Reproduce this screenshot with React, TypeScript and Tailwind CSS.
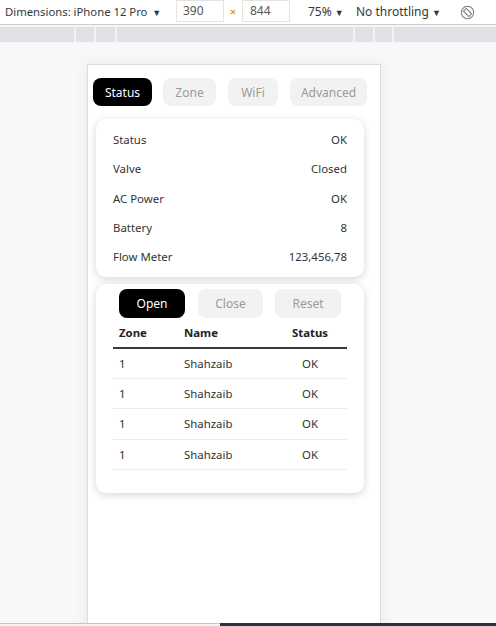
import React from 'react';

const font = { fontFamily: '"Noto Sans", "Open Sans", sans-serif' };

const statusRows = [
    ['Status', 'OK'],
    ['Valve', 'Closed'],
    ['AC Power', 'OK'],
    ['Battery', '8'],
    ['Flow Meter', '123,456,78'],
];

const zones = [1, 2, 3, 4];

// devtools "rotate" glyph
const RotateIcon = () => (
    <svg width="15" height="15" viewBox="0 0 16 16" fill="none" stroke="#7a7a7a" strokeWidth="1.1">
        <circle cx="8" cy="8" r="6.6" />
        <path d="M3.6 6.6 L9.4 12.4 L12.4 9.4 L6.6 3.6 Z" />
    </svg>
);

const Toolbar = () => (
    <div className="h-[25px] shrink-0 flex items-center bg-white border-b border-[#cbcdd1] text-[11.3px] text-[#303942]">
        <span className="ml-[5px] w-[171px]">Dimensions: iPhone 12 Pro <span className="ml-[2px] text-[9px]">▼</span></span>
        <div className="w-[48px] h-[22px] -mt-[2px] border border-[#e3e3e3] pl-[6px] flex items-center text-[#555] text-[12px]">390</div>
        <span className="w-[18px] text-center text-[#e37400]">×</span>
        <div className="w-[48px] h-[22px] -mt-[2px] border border-[#e3e3e3] pl-[7px] flex items-center text-[#555] text-[12px]">844</div>
        <span className="ml-[18px] w-[48px] text-[12px]">75% <span className="text-[9px]">▼</span></span>
        <span className="w-[104px] text-[12px]">No throttling <span className="text-[9px]">▼</span></span>
        <RotateIcon />
    </div>
);

const Ruler = () => (
    <div className="mt-[2px] h-[15px] shrink-0 bg-[#dfe1e5] flex">
        <div className="w-[74px]" />
        <div className="w-[2px] bg-[#f1f2f4]" />
        <div className="w-[18px]" />
        <div className="w-[2px] bg-[#f1f2f4]" />
        <div className="w-[19px]" />
        <div className="w-[2px] bg-[#f1f2f4]" />
        <div className="w-[236px]" />
        <div className="w-[2px] bg-[#f1f2f4]" />
        <div className="w-[18px]" />
        <div className="w-[2px] bg-[#f1f2f4]" />
        <div className="w-[17px]" />
        <div className="w-[2px] bg-[#f1f2f4]" />
    </div>
);

const Tabs = () => (
    <div className="flex pl-[5px] text-[12px]">
        <button className="w-[59px] h-[28px] pt-[1px] rounded-[8px] bg-black text-white">Status</button>
        <button className="ml-[11px] w-[53px] h-[28px] pt-[1px] rounded-[8px] bg-[#f2f2f2] text-[#9a9a9a]">Zone</button>
        <button className="ml-[12px] w-[50px] h-[28px] pt-[1px] rounded-[8px] bg-[#f2f2f2] text-[#9a9a9a]">WiFi</button>
        <button className="ml-[12px] w-[77px] h-[28px] pt-[1px] rounded-[8px] bg-[#f2f2f2] text-[#9a9a9a]">Advanced</button>
    </div>
);

const StatusCard = () => (
    <div className="ml-[8px] mt-[13px] w-[268px] rounded-[10px] bg-white shadow-[0_2px_8px_rgba(0,0,0,0.16)] pt-[6px] pb-[6px] px-[17px] text-[11.4px] text-[#333]">
        {statusRows.map(([label, value]) => (
            <div key={label} className="h-[29.25px] flex items-center justify-between">
                <span>{label}</span>
                <span>{value}</span>
            </div>
        ))}
    </div>
);

const ZoneCard = () => (
    <div className="ml-[8px] mt-[7px] w-[268px] rounded-[10px] bg-white shadow-[0_2px_8px_rgba(0,0,0,0.16)] pt-[5px] pb-[23px] px-[17px] text-[11.4px] text-[#333]">
        <div className="flex pl-[6px] text-[12px]">
            <button className="w-[66px] h-[29px] pt-[1px] rounded-[8px] bg-black text-white">Open</button>
            <button className="ml-[13px] w-[65px] h-[29px] pt-[1px] rounded-[8px] bg-[#f2f2f2] text-[#9a9a9a]">Close</button>
            <button className="ml-[12px] w-[66px] h-[29px] pt-[1px] rounded-[8px] bg-[#f2f2f2] text-[#9a9a9a]">Reset</button>
        </div>
        <table className="w-[234px] border-collapse">
            <thead>
                <tr className="h-[30px] border-b-2 border-[#3a3a3a] text-[#222]">
                    <th className="w-[65px] pl-[6px] text-left font-bold">Zone</th>
                    <th className="w-[95px] pl-[6px] text-left font-bold">Name</th>
                    <th className="w-[74px] text-center font-bold">Status</th>
                </tr>
            </thead>
            <tbody>
                {zones.map((z) => (
                    <tr key={z} className="h-[30.3px] border-b border-[#ececec]">
                        <td className="pl-[6px]">1</td>
                        <td className="pl-[6px]">Shahzaib</td>
                        <td className="text-center">OK</td>
                    </tr>
                ))}
            </tbody>
        </table>
    </div>
);

export default function App() {
    return (
        <div className="w-[496px] h-[626px] overflow-hidden flex flex-col bg-[#f7f8f8]" style={font}>
            <Toolbar />
            <Ruler />
            <div className="flex-1 min-h-0 overflow-hidden">
                <div className="ml-[87px] mt-[22px] w-[294px] h-[600px] bg-white border-x border-t border-[#dcdcdc] shadow-[0_0_14px_rgba(0,0,0,0.07)] pt-[13px]">
                    <Tabs />
                    <StatusCard />
                    <ZoneCard />
                </div>
            </div>
            <div className="h-[3px] shrink-0 flex">
                <div className="w-[220px] bg-[#f3f3f3] border-t border-[#c4c4c4]" />
                <div className="flex-1 bg-[#22363f]" />
            </div>
        </div>
    );
}
